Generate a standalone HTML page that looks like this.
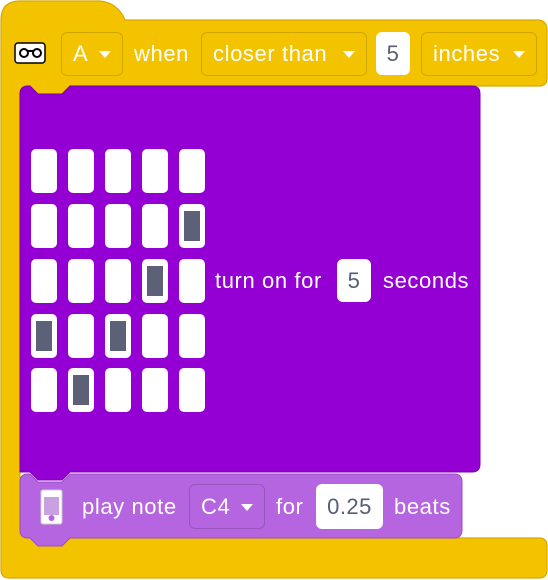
<!DOCTYPE html>
<html><head><style>
body{margin:0;width:548px;height:580px;background:#fff;overflow:hidden;font-family:"Liberation Sans",sans-serif}
svg{position:absolute;left:0;top:0}
.t{position:absolute;color:#fff;font-size:22px;letter-spacing:0.6px;line-height:1}
.dd{position:absolute;border:1.5px solid rgba(0,0,0,.15);border-radius:6px;box-sizing:border-box;color:#fff;font-size:22px;letter-spacing:0.6px;display:flex;align-items:center;padding-left:11px}
.dd:after{content:"";position:absolute;right:11px;top:50%;margin-top:-3px;border-left:6px solid transparent;border-right:6px solid transparent;border-top:7px solid #fff}
.wb{position:absolute;background:#fff;border-radius:6px;color:#575e75;font-size:22px;letter-spacing:0.5px;display:flex;align-items:center;justify-content:center}
.c{position:absolute;width:26px;height:44px;background:#fff;border-radius:5px}
.c i{position:absolute;left:5px;top:7px;width:16px;height:30px;background:#5c6178}
</style></head><body>
<svg width="548" height="580">
<path d="M1,20 Q1,1 20,1 L100,1 Q118,3 125,20 L537,20 Q547,20 547,30 L547,78 Q547,86 539,86 L70,86 L62,94 L38,94 L30,86 L28,86 Q20,86 20,94 L20,530 Q20,538 28,538 L539,538 Q547,538 547,546 L547,570 Q547,578 539,578 L9,578 Q1,578 1,570 Z" fill="#f4c300" stroke="#d7a900" stroke-width="1.2"/>
<path d="M28,86 L30,86 L38,94 L62,94 L70,86 L472,86 Q480,86 480,94 L480,464 Q480,472 472,472 L70,472 L62,480 L38,480 L30,472 L20,472 L20,94 Q20,86 28,86 Z" fill="#9400d3" stroke="#7d00b4" stroke-width="1"/>
<path d="M28,474 L30,474 L38,482 L62,482 L70,474 L454,474 Q462,474 462,482 L462,530 Q462,538 454,538 L70,538 L62,546 L38,546 L30,538 L28,538 Q20,538 20,530 L20,482 Q20,474 28,474 Z" fill="#b565e0" stroke="#9a4cc4" stroke-width="1"/>
<rect x="15" y="43" width="30" height="20" rx="3" fill="#fff" stroke="#000" stroke-width="1.5"/>
<circle cx="24" cy="53" r="4" fill="none" stroke="#000" stroke-width="2"/><circle cx="37" cy="53" r="4" fill="none" stroke="#000" stroke-width="2"/><rect x="27" y="50" width="6" height="2" fill="#000"/>
<rect x="41" y="490" width="21" height="34" rx="2" fill="#fff" stroke="#ccc"/>
<rect x="44" y="497" width="15" height="18" fill="#c9a0e0"/>
<circle cx="51.5" cy="518" r="3" fill="#b565e0"/>
</svg>
<div class="dd" style="left:61px;top:32px;width:62px;height:44px">A</div>
<div class="t" style="left:134px;top:43px">when</div>
<div class="dd" style="left:201px;top:32px;width:166px;height:44px">closer than</div>
<div class="wb" style="left:376px;top:32px;width:34px;height:43px">5</div>
<div class="dd" style="left:421px;top:32px;width:116px;height:44px">inches</div>

<div class="c" style="left:31px;top:149px"></div><div class="c" style="left:68px;top:149px"></div><div class="c" style="left:105px;top:149px"></div><div class="c" style="left:142px;top:149px"></div><div class="c" style="left:179px;top:149px"></div>
<div class="c" style="left:31px;top:204px"></div><div class="c" style="left:68px;top:204px"></div><div class="c" style="left:105px;top:204px"></div><div class="c" style="left:142px;top:204px"></div><div class="c" style="left:179px;top:204px"><i></i></div>
<div class="c" style="left:31px;top:259px"></div><div class="c" style="left:68px;top:259px"></div><div class="c" style="left:105px;top:259px"></div><div class="c" style="left:142px;top:259px"><i></i></div><div class="c" style="left:179px;top:259px"></div>
<div class="c" style="left:31px;top:314px"><i></i></div><div class="c" style="left:68px;top:314px"></div><div class="c" style="left:105px;top:314px"><i></i></div><div class="c" style="left:142px;top:314px"></div><div class="c" style="left:179px;top:314px"></div>
<div class="c" style="left:31px;top:368px"></div><div class="c" style="left:68px;top:368px"><i></i></div><div class="c" style="left:105px;top:368px"></div><div class="c" style="left:142px;top:368px"></div><div class="c" style="left:179px;top:368px"></div>

<div class="t" style="left:215px;top:270px">turn on for</div>
<div class="wb" style="left:337px;top:259px;width:34px;height:43px">5</div>
<div class="t" style="left:383px;top:270px">seconds</div>

<div class="t" style="left:82px;top:496px">play note</div>
<div class="dd" style="left:189px;top:484px;width:76px;height:45px">C4</div>
<div class="t" style="left:276px;top:496px">for</div>
<div class="wb" style="left:316px;top:484px;width:67px;height:45px">0.25</div>
<div class="t" style="left:394px;top:496px">beats</div>
</body></html>
